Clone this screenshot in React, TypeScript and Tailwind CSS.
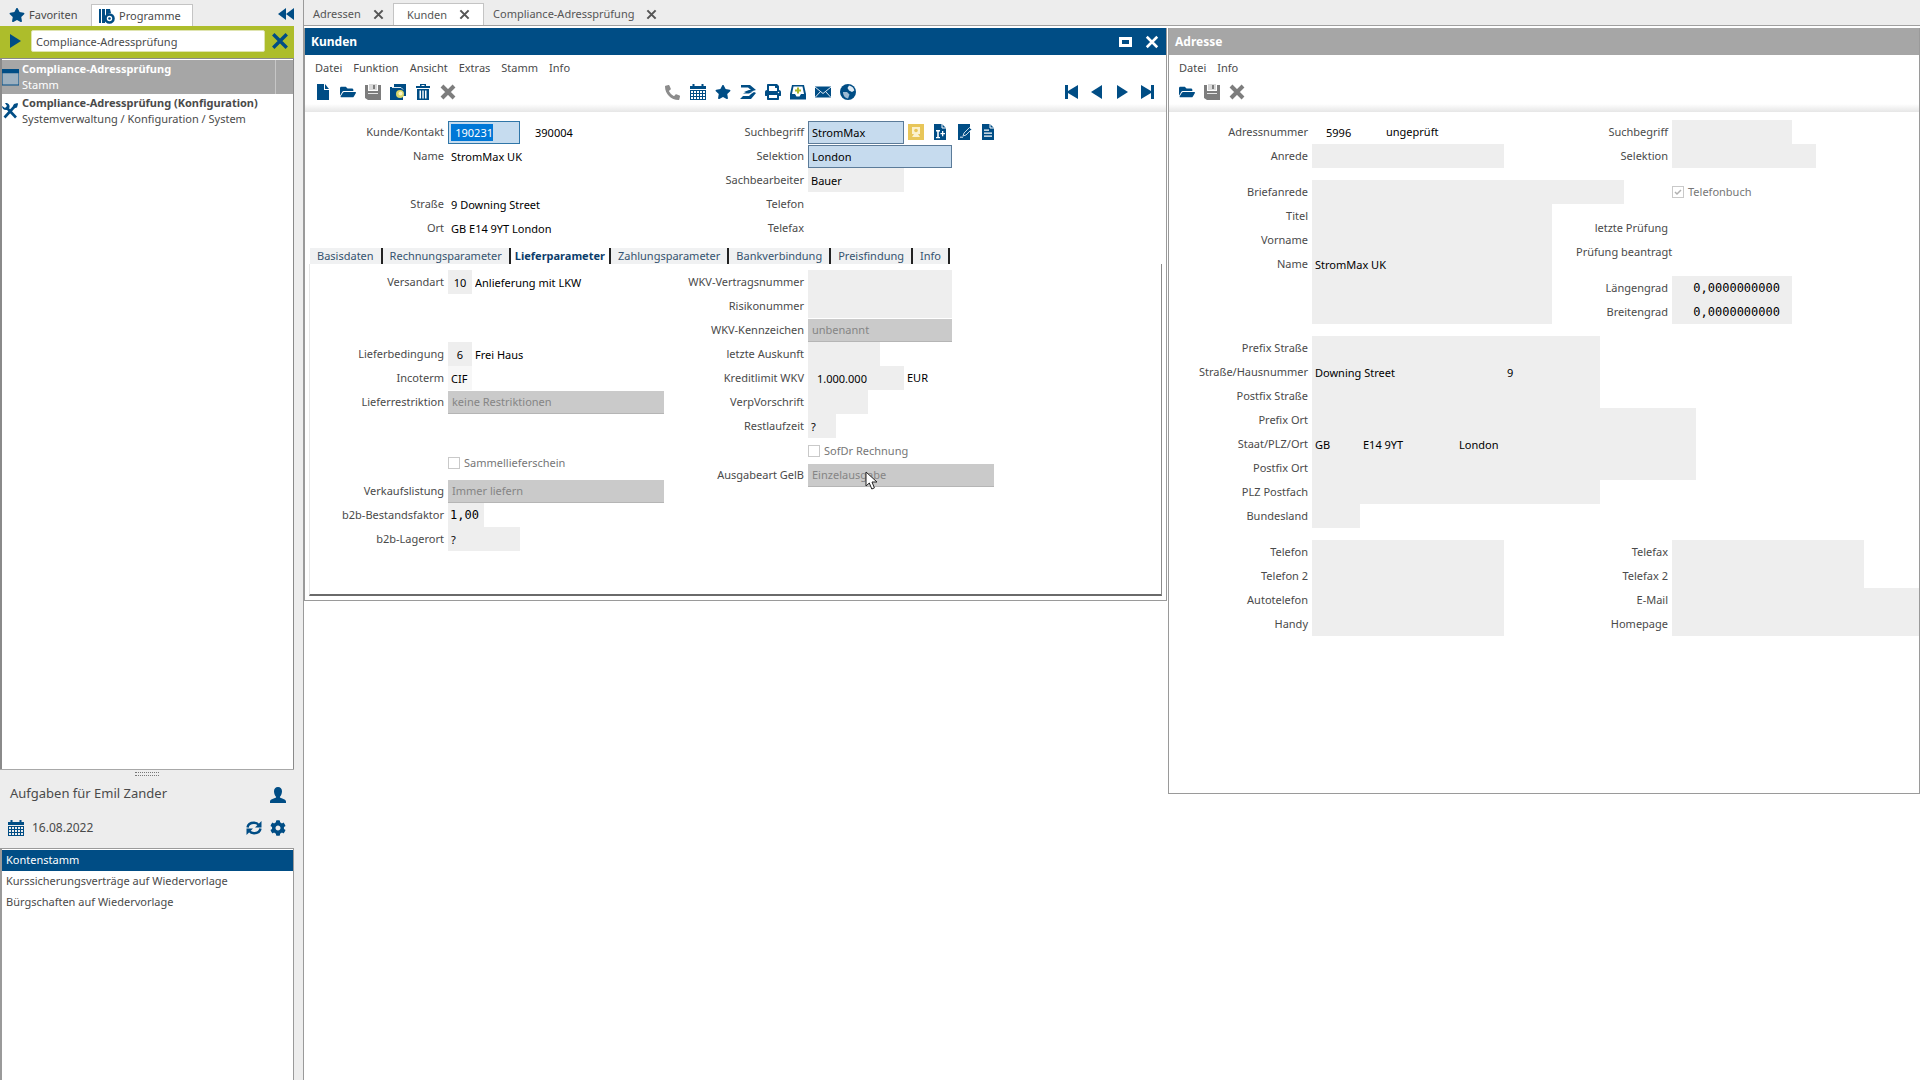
import { useId, type ReactNode } from "react";
import { FaStar, FaFolderOpen, FaPhoneAlt, FaPrint, FaCog } from "react-icons/fa";

const NAVY = "#004d85";
const GREY = "#7d7d7d";

/* ---------- icons ---------- */

function Svg({ children, size = 16, color = NAVY }: { children: ReactNode; size?: number; color?: string }) {
  return (
    <svg width={size} height={size} viewBox="0 0 16 16" fill={color} stroke="none" aria-hidden="true">
      {children}
    </svg>
  );
}

const Cross = ({ color = NAVY, size = 16, thick = 4 }: { color?: string; size?: number; thick?: number }) => (
  <Svg color={color} size={size}>
    <path d="M2 2 14 14M14 2 2 14" stroke={color} strokeWidth={thick} />
  </Svg>
);

const NewFile = () => (
  <Svg>
    <path d="M2 0h7v6h5v10H2z" />
    <path d="M10 0l4 5h-4z" />
  </Svg>
);

const Save = () => (
  <Svg color={GREY}>
    <path d="M0 1h3v6h10V1h3v15H3l-3-2z" />
    <path d="M4 0h8v6H4z" fill="#d9d9d9" />
    <path d="M8 1h2v4H8z" />
    <path d="M3 9h10v1H3z" fill="#e6e6e6" />
  </Svg>
);

const CopyFile = () => (
  <Svg>
    <path d="M4 0h12v12H4z" />
    <path d="M0 3h11l2 2v11H0z" />
    <path d="M2 3.500h9l2 2" fill="none" stroke="#dfe9f1" strokeWidth="1" />
    <circle cx="10" cy="10" r="4" fill="#d8d66a" />
    <circle cx="10.500" cy="9.500" r="2" fill="#fbf8c4" />
  </Svg>
);

const Trash = () => (
  <Svg>
    <path d="M5 0h6v2h4v2H1V2h4zM6.500 1v1h3V1z" fillRule="evenodd" />
    <path d="M2 5h12v11H2zM4.500 6.500v8H6v-8zM7.300 6.500v8h1.400v-8zM10 6.500v8h1.500v-8z" fillRule="evenodd" />
  </Svg>
);

const CalendarGrid = () => (
  <Svg>
    <path d="M0 2h2.500V0h2v2h7V0h2v2H16v3H0z" />
    <path
      fillRule="evenodd"
      d="M0 6h16v10H0zM1 7v2h2V7zM4 7v2h2V7zM7 7v2h2V7zM10 7v2h2V7zM13 7v2h2V7zM1 10v2h2v-2zM4 10v2h2v-2zM7 10v2h2v-2zM10 10v2h2v-2zM13 10v2h2v-2zM1 13v2h2v-2zM4 13v2h2v-2zM7 13v2h2v-2zM10 13v2h2v-2zM13 13v2h2v-2z"
    />
  </Svg>
);

const Workflow = () => (
  <Svg>
    <path d="M1 1h9l6 5-7 2H4l5-2h2L8 3.500H1z" />
    <path d="M14 8l2 1-5 6H0l3-3h6l2-2z" />
    <path d="M3 9.500L8 7l5 .5-4 2z" />
  </Svg>
);

const Inbox = () => (
  <Svg>
    <path fillRule="evenodd" d="M2 1h12l2 9v5.500H0V10zM3.500 2.500L2 10h3l1.500 2.500h3L11 10h3l-1.500-7.500z" />
    <path d="M7 3.500h2v2h2v2H9v2H7v-2H5v-2h2z" fill="#a9b72a" />
  </Svg>
);

const Mail = () => (
  <Svg>
    <path d="M0 2.500h16v11H0z" />
    <path d="M0 3l8 6.500L16 3M0 13.500l5.500-6M16 13.500l-5.500-6" fill="none" stroke="#dce7f0" strokeWidth="1" />
  </Svg>
);

const Globe = () => (
  <Svg>
    <circle cx="8" cy="8" r="8" />
    <path d="M9 1.500c3 .5 5 2.500 5.300 5L12 8 9 6.500 7.500 4z" fill="#dfeaf3" />
    <path d="M3 8h4l2.500 2.500L8 14.500C5 14 3 11.500 3 8z" fill="#9dbbd3" />
  </Svg>
);

const First = () => (
  <Svg>
    <path d="M1 1h3v6l10-6v14L4 9v6H1z" />
  </Svg>
);
const Last = () => (
  <Svg>
    <path d="M15 1h-3v6L2 1v14l10-6v6h3z" />
  </Svg>
);
const Prev = () => (
  <Svg>
    <path d="M13 1v14L2 8z" />
  </Svg>
);
const Next = () => (
  <Svg>
    <path d="M3 1v14l11-7z" />
  </Svg>
);

const Person = () => (
  <Svg>
    <path d="M8 0c2.500 0 4 1.800 4 4.200S10.800 9 9.800 10c0 1.400 6.200 1.600 6.200 4.500V16H0v-1.500C0 11.600 6.200 11.400 6.200 10 5.200 9 4 6.600 4 4.200S5.500 0 8 0z" />
  </Svg>
);

const Refresh = () => (
  <Svg>
    <path d="M1.500 7.500C2 4 5 2.800 8 2.800c2 0 3.500.5 4.500 2" fill="none" stroke={NAVY} strokeWidth="2.400" />
    <path d="M15.500 1v6.500H9z" />
    <path d="M14.500 8.500c-.5 3.500-3.500 4.700-6.500 4.700-2 0-3.500-.5-4.500-2" fill="none" stroke={NAVY} strokeWidth="2.400" />
    <path d="M.5 15V8.500H7z" />
  </Svg>
);

const Contact = () => (
  <Svg color="#e8c659">
    <path d="M0 0h16v16H0z" />
    <path d="M4 3h8v7h-2l2 3H4l2-3H4z" fill="#fbf1cd" />
    <circle cx="8" cy="6.500" r="1.800" />
  </Svg>
);

const PageSheet = ({ children }: { children: ReactNode }) => (
  <Svg>
    <path d="M2 0h8l4 4v12H2z" />
    <path d="M10 0v4h4" fill="none" stroke="#fff" strokeWidth="1" />
    {children}
  </Svg>
);
const PageAdd = () => (
  <PageSheet>
    <path d="M4 6h4v1.500H6.800V13H8v1.300H4V13h1.200V7.500H4zM10 7h1.300v2H13v1.300h-1.700v2H10v-2H8.500V9H10z" fill="#fff" />
  </PageSheet>
);
const PageEdit = () => (
  <Svg>
    <path d="M2 0h12v16H2z" />
    <path d="M13.500 3.500l2 2L10 11l-3 1 1-3z" stroke="#c9dae7" strokeWidth="1" />
    <path d="M4 12.500h3V14H4z" fill="#9fbdd4" />
  </Svg>
);
const PageText = () => (
  <PageSheet>
    <path d="M4 5.500h5v1.300H4zM4 8.500h8v1.300H4zM4 11.500h8v1.300H4z" fill="#fff" />
  </PageSheet>
);

const Collapse = () => (
  <Svg>
    <path d="M8 2v12L0 8zM16 2v12L8 8z" />
  </Svg>
);

const Programs = () => (
  <Svg>
    <path d="M0 1h2v14H0zM3 1h3v14H3z" />
    <path d="M7 1h4l1 4a5.500 5.500 0 0 0-5 5z" />
    <circle cx="10.500" cy="10.500" r="4" fill="none" stroke={NAVY} strokeWidth="2.600" />
    <circle cx="10.500" cy="10.500" r="1.300" />
  </Svg>
);

const WindowIcon = () => (
  <Svg size={17}>
    <path d="M0 1h16v14H0z" fill="#9db0bf" stroke={NAVY} strokeWidth="1" />
    <path d="M0 0h16v4H0z" />
  </Svg>
);

const Tools = () => (
  <Svg>
    <path d="M2.500 14.500L13 3" stroke={NAVY} strokeWidth="2.600" fill="none" />
    <path d="M5 5l9 9.500" stroke={NAVY} strokeWidth="2.600" fill="none" />
    <path d="M0 3l3 2 2-2-2-3c3-.5 5 1.500 4.500 4.500L5 7C2 7.500 0 5.500 0 3z" />
    <path d="M12 1l3.500-1L16 1l-1 3.500-2 .5-2-2z" />
  </Svg>
);

const Pointer = () => (
  <svg width="13" height="20" viewBox="0 0 13 20" aria-hidden="true">
    <path d="M1 1v14l3.300-3 2.500 6 2.600-1.100L7 11h5z" fill="#fff" stroke="#222" strokeWidth="1" />
  </svg>
);

/* ---------- building blocks ---------- */

function IconButton({ label, children }: { label: string; children: ReactNode }) {
  return (
    <button type="button" aria-label={label} className="flex h-6 w-[25px] items-center justify-center">
      {children}
    </button>
  );
}

/** One form line: a right-aligned caption followed by its control. */
function Row({ label, lw, children }: { label: string; lw: string; children?: (id: string) => ReactNode }) {
  const id = useId();
  return (
    <div className="flex h-6 items-center whitespace-nowrap">
      <label htmlFor={children ? id : undefined} className={`${lw} shrink-0 pr-1 text-right text-[#4a4a4a]`}>
        {label}
      </label>
      {children?.(id)}
    </div>
  );
}

function Box({ id, w, v = "", cls = "bg-[#eeeeee]", name }: { id?: string; w: string; v?: string; cls?: string; name?: string }) {
  return <input id={id} aria-label={name} type="text" readOnly value={v} className={`h-6 shrink-0 px-[3px] text-black outline-none ${w} ${cls}`} />;
}

function Drop({ id, w, v }: { id: string; w: string; v: string }) {
  return (
    <select id={id} disabled className={`h-[23px] shrink-0 appearance-none border-b border-[#b5b5b5] bg-[#cacaca] px-1 text-[#858585] opacity-100 ${w}`}>
      <option>{v}</option>
    </select>
  );
}

function Check({ text, checked, pad }: { text: string; checked?: boolean; pad: string }) {
  return (
    <label className={`flex h-6 items-center gap-1 text-[#767676] ${pad}`}>
      <span className="relative flex h-3 w-3">
        <input type="checkbox" disabled checked={!!checked} readOnly className="h-3 w-3 appearance-none border border-[#c9c9c9] bg-white" />
        {checked && (
          <svg className="absolute inset-0" width="12" height="12" viewBox="0 0 12 12" aria-hidden="true">
            <path d="M3 6l2 2 4-4" fill="none" stroke="#b0b0b0" strokeWidth="1.500" />
          </svg>
        )}
      </span>
      {text}
    </label>
  );
}

function MenuBar({ items }: { items: string[] }) {
  return (
    <nav className="flex h-[25px] items-center gap-[11px] px-[10px] text-[#4a4a4a]">
      {items.map((m) => (
        <button type="button" key={m}>
          {m}
        </button>
      ))}
    </nav>
  );
}

const ToolbarEdge = () => <div className="h-2 bg-linear-to-b from-white to-[#e6e6e6]" />;

/* ---------- sidebar ---------- */

function Sidebar() {
  return (
    <aside className="flex w-[304px] shrink-0 flex-col border-r border-[#9a9a9a] bg-[#ededed] pr-[9px] text-[#4a4a4a]">
      <div className="flex h-[26px] items-end">
        <button type="button" className="flex h-[22px] w-[91px] items-center gap-1 pl-[9px]">
          <FaStar size={16} color={NAVY} />
          Favoriten
        </button>
        <button type="button" className="flex h-[22px] w-[102px] items-center gap-1 border-x border-t border-[#c4c4c4] bg-white pl-[7px]">
          <Programs />
          Programme
        </button>
        <button type="button" aria-label="Einklappen" className="mb-1 ml-auto">
          <Collapse />
        </button>
      </div>
      <div className="flex h-8 items-center bg-[#adbd2b] pr-[5px] pb-[2px] pl-[7px]">
        <button type="button" aria-label="Suche starten" className="w-6">
          <Next />
        </button>
        <input type="text" aria-label="Programmsuche" defaultValue="Compliance-Adressprüfung" className="h-[22px] min-w-0 flex-1 rounded-xs border border-[#dfe4b0] bg-white px-1 outline-none" />
        <button type="button" aria-label="Suche leeren" className="ml-[6px]">
          <Cross size={18} thick={3} />
        </button>
      </div>
      <ul className="flex-1 border-t border-r border-l-2 border-[#8a8a8a] bg-white pt-px">
        <li className="flex h-[34px] items-center bg-[#a6a6a6] text-white">
          <WindowIcon />
          <div className="flex-1 pl-[3px] leading-4">
            <b className="block">Compliance-Adressprüfung</b>
            <span className="block">Stamm</span>
          </div>
          <span className="h-full w-[18px] border-l border-[#c6c6c6]" />
        </li>
        <li className="flex h-[34px] items-center">
          <Tools />
          <div className="pl-1 leading-4">
            <b className="block">Compliance-Adressprüfung (Konfiguration)</b>
            <span className="block">Systemverwaltung / Konfiguration / System</span>
          </div>
        </li>
      </ul>
      <div className="flex h-2 items-center justify-center border-t border-[#a8a8a8]">
        <span className="h-1 w-6 border-y border-dotted border-[#777]" />
      </div>
      <div className="flex h-8 items-center justify-between pr-2 pl-[10px] text-[13px]">
        Aufgaben für Emil Zander
        <span className="pt-1">
          <Person />
        </span>
      </div>
      <div className="flex h-[39px] items-center pr-2 pb-[2px] pl-2 text-[12px]">
        <CalendarGrid />
        <span className="flex-1 pl-2">16.08.2022</span>
        <button type="button" aria-label="Aktualisieren" className="mr-2">
          <Refresh />
        </button>
        <button type="button" aria-label="Einstellungen">
          <FaCog size={16} color={NAVY} />
        </button>
      </div>
      <ul className="h-[232px] border-t border-r border-l-2 border-[#9a9a9a] bg-white pt-px">
        <li className="h-[21px] bg-[#004d85] px-1 leading-[19px] text-white">Kontenstamm</li>
        <li className="h-[21px] px-1 leading-[19px]">Kurssicherungsverträge auf Wiedervorlage</li>
        <li className="h-[21px] px-1 leading-[19px]">Bürgschaften auf Wiedervorlage</li>
      </ul>
    </aside>
  );
}

/* ---------- window "Kunden" ---------- */

const KL = "w-[138px]";
const KR = "w-[144px]";

function KundenWindow() {
  const tabs = ["Basisdaten", "Rechnungsparameter", "Lieferparameter", "Zahlungsparameter", "Bankverbindung", "Preisfindung", "Info"];
  return (
    <section className="w-[863px] shrink-0 border-x border-b border-[#9a9a9a] bg-white pb-1">
      <header className="flex h-[27px] items-center bg-[#004d85] pr-[7px] pl-[6px] text-white">
        <h1 className="flex-1 text-[12px] font-bold">Kunden</h1>
        <button type="button" aria-label="Maximieren" className="mr-[13px]">
          <span className="block h-[10px] w-[13px] border-3 border-white" />
        </button>
        <button type="button" aria-label="Schließen">
          <Cross color="#fff" size={14} thick={3} />
        </button>
      </header>
      <MenuBar items={["Datei", "Funktion", "Ansicht", "Extras", "Stamm", "Info"]} />
      <div className="flex pr-[7px] pl-[5px]">
        <IconButton label="Neu"><NewFile /></IconButton>
        <IconButton label="Öffnen"><FaFolderOpen size={16} color={NAVY} /></IconButton>
        <IconButton label="Speichern"><Save /></IconButton>
        <IconButton label="Kopieren"><CopyFile /></IconButton>
        <IconButton label="Löschen"><Trash /></IconButton>
        <IconButton label="Abbrechen"><Cross color={GREY} /></IconButton>
        <div className="ml-[200px] flex flex-1">
          <IconButton label="Telefon"><FaPhoneAlt size={15} color="#8c8c8c" className="-scale-x-100 rotate-90" /></IconButton>
          <IconButton label="Kalender"><CalendarGrid /></IconButton>
          <IconButton label="Favorit"><FaStar size={16} color={NAVY} /></IconButton>
          <IconButton label="Workflow"><Workflow /></IconButton>
          <IconButton label="Drucken"><FaPrint size={16} color={NAVY} /></IconButton>
          <IconButton label="Ablage"><Inbox /></IconButton>
          <IconButton label="E-Mail"><Mail /></IconButton>
          <IconButton label="Web"><Globe /></IconButton>
        </div>
        <IconButton label="Erster"><First /></IconButton>
        <IconButton label="Voriger"><Prev /></IconButton>
        <IconButton label="Nächster"><Next /></IconButton>
        <IconButton label="Letzter"><Last /></IconButton>
      </div>
      <ToolbarEdge />

      <div className="flex px-[5px] pt-2">
        <div className="w-[354px] shrink-0">
          <Row label="Kunde/Kontakt" lw={KL}>
            {(id) => (
              <>
                <span className="flex h-[23px] w-[72px] shrink-0 items-center border border-[#2f76a8] bg-[#c6dcef] pl-[2px]">
                  <input id={id} type="text" readOnly value="190231" className="h-[17px] w-[42px] bg-[#0078d7] px-0 text-right text-white outline-none" />
                </span>
                <Box name="Kontakt" w="ml-3 w-[72px]" v="390004" cls="bg-white" />
              </>
            )}
          </Row>
          <Row label="Name" lw={KL}>{(id) => <Box id={id} w="w-[216px]" v="StromMax UK" cls="bg-white" />}</Row>
          <div className="h-6" />
          <Row label="Straße" lw={KL}>{(id) => <Box id={id} w="w-[216px]" v="9 Downing Street" cls="bg-white" />}</Row>
          <Row label="Ort" lw={KL}>{(id) => <Box id={id} w="w-[216px]" v="GB E14 9YT London" cls="bg-white" />}</Row>
        </div>
        <div>
          <Row label="Suchbegriff" lw={KR}>
            {(id) => (
              <>
                <Box id={id} w="w-24" v="StromMax" cls="h-[23px]! border border-[#5b7b99] bg-[#c6dbee] px-[2px]" />
                <button type="button" aria-label="Kontakt" className="flex w-6 justify-center"><Contact /></button>
                <button type="button" aria-label="Notiz anlegen" className="flex w-6 justify-center"><PageAdd /></button>
                <button type="button" aria-label="Notiz bearbeiten" className="flex w-6 justify-center"><PageEdit /></button>
                <button type="button" aria-label="Notizen" className="flex w-6 justify-center"><PageText /></button>
              </>
            )}
          </Row>
          <Row label="Selektion" lw={KR}>
            {(id) => <Box id={id} w="w-36" v="London" cls="h-[23px]! border border-[#5b7b99] bg-[#c6dbee] px-[2px]" />}
          </Row>
          <Row label="Sachbearbeiter" lw={KR}>{(id) => <Box id={id} w="w-24" v="Bauer" />}</Row>
          <Row label="Telefon" lw={KR}>{(id) => <Box id={id} w="w-36" cls="bg-white" />}</Row>
          <Row label="Telefax" lw={KR}>{(id) => <Box id={id} w="w-36" cls="bg-white" />}</Row>
        </div>
      </div>

      <div role="tablist" className="mx-[5px] mt-2 flex h-4">
        {tabs.map((t) => {
          const on = t === "Lieferparameter";
          return (
            <button
              type="button"
              role="tab"
              aria-selected={on}
              key={t}
              className={`flex items-center border-r-2 leading-4 ${on ? "border-[#222] bg-white px-1 font-bold text-[#0b3d6b]" : "border-[#222] bg-[#f0f1f2] px-[7px] text-[#35536f]"}`}
            >
              {t}
            </button>
          );
        })}
      </div>
      <div className="mx-1 flex border-r border-b-2 border-l border-r-[#8a8a8a] border-b-[#6a6a6a] border-l-[#e6e6e6] pt-[6px] pb-[43px]">
        <div className="w-[354px] shrink-0">
          <Row label="Versandart" lw={KL}>
            {(id) => (
              <>
                <Box id={id} w="w-6" v="10" cls="bg-[#eeeeee] text-center px-0!" />
                <Box name="Versandart Text" w="w-48" v="Anlieferung mit LKW" cls="bg-white" />
              </>
            )}
          </Row>
          <div className="h-12" />
          <Row label="Lieferbedingung" lw={KL}>
            {(id) => (
              <>
                <Box id={id} w="w-6" v="6" cls="bg-[#eeeeee] text-center px-0!" />
                <Box name="Lieferbedingung Text" w="w-48" v="Frei Haus" cls="bg-white" />
              </>
            )}
          </Row>
          <Row label="Incoterm" lw={KL}>{(id) => <Box id={id} w="w-6" v="CIF" cls="bg-[#f7f7f7]" />}</Row>
          <Row label="Lieferrestriktion" lw={KL}>{(id) => <Drop id={id} w="w-[216px]" v="keine Restriktionen" />}</Row>
          <div className="h-[37px]" />
          <Check text="Sammellieferschein" pad="pl-[138px]" />
          <div className="h-1" />
          <Row label="Verkaufslistung" lw={KL}>{(id) => <Drop id={id} w="w-[216px]" v="Immer liefern" />}</Row>
          <Row label="b2b-Bestandsfaktor" lw={KL}>
            {(id) => <Box id={id} w="w-9" v="1,00" cls="bg-[#eeeeee] font-['DejaVu_Sans_Mono',monospace] text-[12px] px-[2px]!" />}
          </Row>
          <Row label="b2b-Lagerort" lw={KL}>{(id) => <Box id={id} w="w-[72px]" v="?" />}</Row>
        </div>
        <div>
          <Row label="WKV-Vertragsnummer" lw={KR}>{(id) => <Box id={id} w="w-36" />}</Row>
          <Row label="Risikonummer" lw={KR}>{(id) => <Box id={id} w="w-36" />}</Row>
          <Row label="WKV-Kennzeichen" lw={KR}>{(id) => <Drop id={id} w="w-36" v="unbenannt" />}</Row>
          <Row label="letzte Auskunft" lw={KR}>{(id) => <Box id={id} w="w-[72px]" />}</Row>
          <Row label="Kreditlimit WKV" lw={KR}>
            {(id) => (
              <>
                <Box id={id} w="w-24" v="1.000.000" cls="bg-[#eeeeee] pl-[9px]" />
                <span className="pl-[3px] text-black">EUR</span>
              </>
            )}
          </Row>
          <Row label="VerpVorschrift" lw={KR}>{(id) => <Box id={id} w="w-[60px]" />}</Row>
          <Row label="Restlaufzeit" lw={KR}>{(id) => <Box id={id} w="w-[28px]" v="?" />}</Row>
          <div className="h-px" />
          <Check text="SofDr Rechnung" pad="pl-[144px]" />
          <Row label="Ausgabeart GelB" lw={KR}>
            {(id) => (
              <span className="relative flex">
                <Drop id={id} w="w-[186px]" v="Einzelausgabe" />
                <span className="absolute top-[7px] left-[57px]">
                  <Pointer />
                </span>
              </span>
            )}
          </Row>
        </div>
      </div>
    </section>
  );
}

/* ---------- window "Adresse" ---------- */

const AL = "w-[143px]";
const AR = "w-24";
const MONO = "bg-[#eeeeee] text-right font-['DejaVu_Sans_Mono',monospace] text-[12px] pr-[12px]!";

function AdresseWindow() {
  return (
    <section className="min-w-0 flex-1 overflow-hidden border-r border-b border-[#9a9a9a] bg-white pb-[157px]">
      <header className="flex h-[27px] items-center bg-[#a6a6a6] pl-[6px] text-white">
        <h2 className="text-[12px] font-bold">Adresse</h2>
      </header>
      <MenuBar items={["Datei", "Info"]} />
      <div className="flex pl-[5px]">
        <IconButton label="Öffnen"><FaFolderOpen size={16} color={NAVY} /></IconButton>
        <IconButton label="Speichern"><Save /></IconButton>
        <IconButton label="Abbrechen"><Cross color={GREY} /></IconButton>
      </div>
      <ToolbarEdge />

      <div className="flex pt-2">
        <div className="w-[407px] shrink-0">
          <Row label="Adressnummer" lw={AL}>
            {(id) => (
              <>
                <Box id={id} w="w-[60px]" v="5996" cls="bg-white pl-[14px]" />
                <span className="pl-[14px] text-black">ungeprüft</span>
              </>
            )}
          </Row>
          <Row label="Anrede" lw={AL}>{(id) => <Box id={id} w="w-48" />}</Row>
          <div className="h-3" />
          <Row label="Briefanrede" lw={AL}>{(id) => <Box id={id} w="w-[312px]" />}</Row>
          <Row label="Titel" lw={AL}>{(id) => <Box id={id} w="w-60" />}</Row>
          <Row label="Vorname" lw={AL}>{(id) => <Box id={id} w="w-60" />}</Row>
          <Row label="Name" lw={AL}>{(id) => <Box id={id} w="w-60" v="StromMax UK" />}</Row>
          <Row label="" lw={AL}>{() => <Box name="Name 2" w="w-60" />}</Row>
          <Row label="" lw={AL}>{() => <Box name="Name 3" w="w-60" />}</Row>
        </div>
        <div>
          <Row label="Suchbegriff" lw={AR}>{(id) => <Box id={id} w="w-30" />}</Row>
          <Row label="Selektion" lw={AR}>{(id) => <Box id={id} w="w-36" />}</Row>
          <div className="h-3" />
          <Check text="Telefonbuch" checked pad="pl-24" />
          <div className="h-3" />
          <Row label="letzte Prüfung" lw={AR} />
          <Row label="Prüfung beantragt" lw={AR} />
          <div className="h-3" />
          <Row label="Längengrad" lw={AR}>{(id) => <Box id={id} w="w-30" v="0,0000000000" cls={MONO} />}</Row>
          <Row label="Breitengrad" lw={AR}>{(id) => <Box id={id} w="w-30" v="0,0000000000" cls={MONO} />}</Row>
        </div>
      </div>

      <div className="pt-3">
        <Row label="Prefix Straße" lw={AL}>{(id) => <Box id={id} w="w-72" />}</Row>
        <Row label="Straße/Hausnummer" lw={AL}>
          {(id) => (
            <>
              <Box id={id} w="w-48" v="Downing Street" />
              <Box name="Hausnummer" w="w-24" v="9" />
            </>
          )}
        </Row>
        <Row label="Postfix Straße" lw={AL}>{(id) => <Box id={id} w="w-72" />}</Row>
        <Row label="Prefix Ort" lw={AL}>{(id) => <Box id={id} w="w-96" />}</Row>
        <Row label="Staat/PLZ/Ort" lw={AL}>
          {(id) => (
            <>
              <Box id={id} w="w-12" v="GB" />
              <Box name="PLZ" w="w-24" v="E14 9YT" />
              <Box name="Ort" w="w-60" v="London" />
            </>
          )}
        </Row>
        <Row label="Postfix Ort" lw={AL}>{(id) => <Box id={id} w="w-96" />}</Row>
        <Row label="PLZ Postfach" lw={AL}>{(id) => <Box id={id} w="w-72" />}</Row>
        <Row label="Bundesland" lw={AL}>{(id) => <Box id={id} w="w-12" />}</Row>
      </div>

      <div className="flex pt-3">
        <div className="w-[407px] shrink-0">
          <Row label="Telefon" lw={AL}>{(id) => <Box id={id} w="w-48" />}</Row>
          <Row label="Telefon 2" lw={AL}>{(id) => <Box id={id} w="w-48" />}</Row>
          <Row label="Autotelefon" lw={AL}>{(id) => <Box id={id} w="w-48" />}</Row>
          <Row label="Handy" lw={AL}>{(id) => <Box id={id} w="w-48" />}</Row>
        </div>
        <div className="min-w-0 flex-1">
          <Row label="Telefax" lw={AR}>{(id) => <Box id={id} w="w-48" />}</Row>
          <Row label="Telefax 2" lw={AR}>{(id) => <Box id={id} w="w-48" />}</Row>
          <Row label="E-Mail" lw={AR}>{(id) => <Box id={id} w="min-w-0 flex-1" />}</Row>
          <Row label="Homepage" lw={AR}>{(id) => <Box id={id} w="min-w-0 flex-1" />}</Row>
        </div>
      </div>
    </section>
  );
}

/* ---------- page ---------- */

function DocTab({ text, on }: { text: string; on?: boolean }) {
  return (
    <div className={`flex h-[22px] items-center gap-3 ${on ? "border-x border-t border-[#c4c4c4] bg-white px-[13px]" : "px-[9px]"}`}>
      <button type="button">{text}</button>
      <button type="button" aria-label={`${text} schließen`}>
        <Cross color="#555" size={11} thick={3} />
      </button>
    </div>
  );
}

export default function App() {
  return (
    <div className="flex min-h-screen bg-white font-['Noto_Sans',sans-serif] text-[11px] leading-4">
      <Sidebar />
      <main className="flex min-w-0 flex-1 flex-col">
        <div className="flex h-[26px] items-end border-b border-[#a0a0a0] bg-[#ededed] text-[#555]">
          <DocTab text="Adressen" />
          <DocTab text="Kunden" on />
          <DocTab text="Compliance-Adressprüfung" />
        </div>
        <div className="flex items-start gap-px pt-[2px]">
          <KundenWindow />
          <div className="flex min-w-0 flex-1 border-l border-[#9a9a9a]">
            <AdresseWindow />
          </div>
        </div>
      </main>
    </div>
  );
}
